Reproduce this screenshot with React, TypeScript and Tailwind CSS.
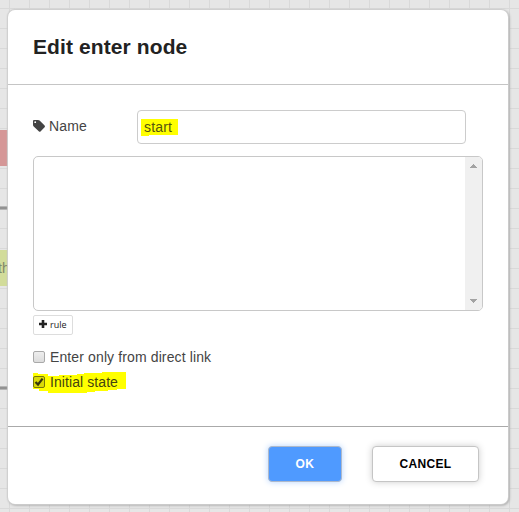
import React from 'react';

function TagIcon() {
  return (
    <svg className="h-3 w-3 shrink-0" viewBox="0 0 12 12" fill="#444">
      <path fillRule="evenodd" d="M0 1Q0 0 1 0H5Q5.9 0 6.6.6L11.6 5.6Q12.3 6.4 11.6 7.2L7.5 11.5Q6.8 12.2 6 11.5L.7 6.4Q0 5.7 0 4.9ZM2.2 1.3a.9.9 0 1 0 0 1.8a.9.9 0 0 0 0-1.8Z" />
    </svg>
  );
}

function Checkbox({ checked = false }: { checked?: boolean }) {
  return (
    <span
      role="checkbox"
      aria-checked={checked}
      className={
        checked
          ? 'relative block h-3 w-3 shrink-0 rounded-[2px] border border-[#77770a] bg-[#dada08]'
          : 'relative block h-3 w-3 shrink-0 rounded-[2px] border border-[#a9a9a9] bg-linear-to-b from-[#eee] to-[#dcdcdc]'
      }
    >
      {checked && (
        <svg className="absolute left-0 top-0 h-[10px] w-[10px]" viewBox="0 0 10 10" fill="none" stroke="#36360c" strokeWidth="2.2">
          <path d="M1.5 5L4 7.5L8.6 1.6" />
        </svg>
      )}
    </span>
  );
}

export default function App() {
  return (
    <div className="relative h-[512px] w-[519px] overflow-hidden bg-[#e6e6e6] bg-[linear-gradient(to_right,#d9d9d9_1px,transparent_1px),linear-gradient(to_bottom,#d9d9d9_1px,transparent_1px)] bg-[size:20px_20px] bg-[position:9px_8px] px-2 pt-[10px] font-['Liberation_Sans',Arial,sans-serif] text-[14px] text-[#444]">
      <div className="absolute left-0 top-[130px] h-9 w-2 bg-[#d59797]" />
      <div className="absolute left-0 top-[206px] h-1 w-2 border-y border-[#b5b5b5] bg-[#929292]" />
      <div className="absolute left-0 top-[250px] h-9 w-2 bg-[#d2dc9a]">
        <span className="absolute -left-[2px] top-[9px] leading-[18px] text-[#7f876a]">th</span>
      </div>
      <div className="absolute left-0 top-[386px] h-1 w-2 border-y border-[#b5b5b5] bg-[#929292]" />

      <main className="relative flex h-[494px] w-[500px] flex-col rounded-[7px] bg-white shadow-[0_0_1px_1px_#cfcfcf,1px_1px_3px_#888]">
        <header className="flex h-[75px] shrink-0 items-center border-b border-[#c5c5c5] pl-[25px]">
          <h1 className="text-[21px] font-bold leading-6 tracking-[0.1px] text-[#222]">Edit enter node</h1>
        </header>

        <section className="flex h-[341px] shrink-0 flex-col px-[25px] pt-[25px]">
          <div className="flex h-[34px]">
            <label className="flex w-[104px] items-center gap-1 pb-[2px]">
              <TagIcon />
              <span className="tracking-[0.12px]">Name</span>
            </label>
            <div className="flex w-[329px] items-center rounded-[4px] border border-[#ccc] pl-[3px]">
              <span className="relative h-[17px] w-[37px] pl-[3px] leading-[17px] text-[#55550f]">
                <svg className="absolute left-0 top-0 h-[17px] w-[37px]" viewBox="0 0 37 17" fill="#ff0">
                  <path d="M0 0H37V16H8V17H0Z" />
                </svg>
                <span className="relative tracking-[0.15px]">start</span>
              </span>
            </div>
          </div>

          <div className="mt-3 flex h-[155px] w-[450px] shrink-0 justify-end overflow-hidden rounded-[5px] border border-[#c8c8c8]">
            <div className="flex w-[17px] flex-col items-center justify-between bg-[#f0f0f0] py-[7px]">
              <svg className="h-1 w-[7px]" viewBox="0 0 7 4" fill="#a3a3a3" shapeRendering="crispEdges"><path d="M3 0H4V1H5V2H6V3H7V4H0V3H1V2H2V1H3Z" /></svg>
              <svg className="h-1 w-[7px]" viewBox="0 0 7 4" fill="#a3a3a3" shapeRendering="crispEdges"><path d="M0 0H7V1H6V2H5V3H4V4H3V3H2V2H1V1H0Z" /></svg>
            </div>
          </div>

          <button className="mt-1 flex h-5 w-10 shrink-0 items-center rounded-[2px] border border-[#ddd] pl-[5px] font-['Open_Sans',sans-serif] text-[9px] text-[#222]">
            <svg className="mr-[3px] h-2 w-2 -translate-y-px" viewBox="0 0 8 8" fill="#222"><path d="M2.7 0H5.3V2.7H8V5.3H5.3V8H2.7V5.3H0V2.7H2.7Z" /></svg>
            rule
          </button>

          <div className="mt-[13px] flex h-[18px] items-center gap-[5px]">
            <Checkbox />
            <span className="tracking-[0.12px]">Enter only from direct link</span>
          </div>
          <div className="relative mt-[7px] flex h-[18px] items-center gap-[5px] text-[#444410]">
            <svg className="absolute left-0 -top-px h-[21px] w-[93px]" viewBox="0 0 93 21" fill="#ff0">
              <path d="M0 1H5V2H15V4H26V3H44V2H51V1H69V0H93V17H84V18H75V19H62V20H54V21H15V19H6V17H0Z" />
            </svg>
            <Checkbox checked />
            <span className="relative tracking-[0.08px]">Initial state</span>
          </div>
        </section>

        <footer className="flex flex-1 items-start justify-end border-t border-[#aaa] pr-[29px] pt-[19px]">
          <button className="mr-[30px] h-9 w-[74px] rounded-[4px] border border-[#aeb9ca] bg-[#4f9aff] text-[12px] font-bold tracking-[0.5px] text-white shadow-[0_0_6px_#b6d5ff]">OK</button>
          <button className="h-9 w-[107px] rounded-[4px] border border-[#c5c5c5] bg-white text-[12px] font-bold tracking-[0.3px] text-black shadow-[0_0_7px_#ccc]">CANCEL</button>
        </footer>
      </main>
    </div>
  );
}
